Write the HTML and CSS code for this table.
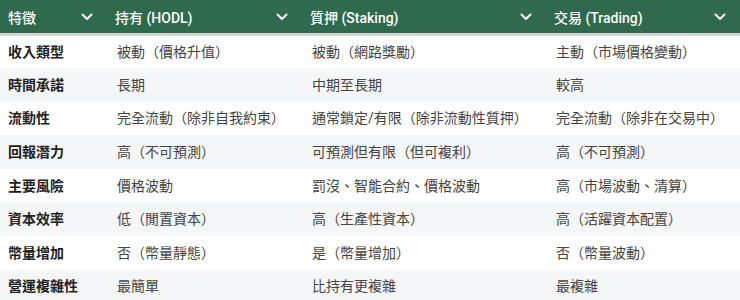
FILE: index.html
```html
<!DOCTYPE html>
<html lang="zh-Hant">
<head>
<meta charset="utf-8">
<link rel="stylesheet" href="styles.css">
</head>
<body>
<table class="cmp">
  <colgroup>
    <col class="c1"><col class="c2"><col class="c3"><col class="c4">
  </colgroup>
  <thead>
    <tr>
      <th><div class="th"><span>特徵</span><svg class="chev" viewBox="0 0 12 8"><path d="M1.5 1.5 L6 6 L10.5 1.5"/></svg></div></th>
      <th><div class="th"><span>持有 (HODL)</span><svg class="chev" viewBox="0 0 12 8"><path d="M1.5 1.5 L6 6 L10.5 1.5"/></svg></div></th>
      <th><div class="th"><span>質押 (Staking)</span><svg class="chev" viewBox="0 0 12 8"><path d="M1.5 1.5 L6 6 L10.5 1.5"/></svg></div></th>
      <th><div class="th"><span>交易 (Trading)</span><svg class="chev" viewBox="0 0 12 8"><path d="M1.5 1.5 L6 6 L10.5 1.5"/></svg></div></th>
    </tr>
  </thead>
  <tbody>
    <tr><td>收入類型</td><td>被動（價格升值）</td><td>被動（網路獎勵）</td><td>主動（市場價格變動）</td></tr>
    <tr><td>時間承諾</td><td>長期</td><td>中期至長期</td><td>較高</td></tr>
    <tr><td>流動性</td><td>完全流動（除非自我約束）</td><td>通常鎖定/有限（除非流動性質押）</td><td>完全流動（除非在交易中）</td></tr>
    <tr><td>回報潛力</td><td>高（不可預測）</td><td>可預測但有限（但可複利）</td><td>高（不可預測）</td></tr>
    <tr><td>主要風險</td><td>價格波動</td><td>罰沒、智能合約、價格波動</td><td>高（市場波動、清算）</td></tr>
    <tr><td>資本效率</td><td>低（閒置資本）</td><td>高（生產性資本）</td><td>高（活躍資本配置）</td></tr>
    <tr><td>幣量增加</td><td>否（幣量靜態）</td><td>是（幣量增加）</td><td>否（幣量波動）</td></tr>
    <tr><td>營運複雜性</td><td>最簡單</td><td>比持有更複雜</td><td>最複雜</td></tr>
  </tbody>
</table>
</body>
</html>
```

FILE: styles.css
```css
html, body {
  margin: 0;
  padding: 0;
  background: #ffffff;
}
body {
  font-family: Roboto, "Noto Sans CJK TC", "Noto Sans", sans-serif;
  font-size: 14px;
  color: #444444;
}
.cmp {
  width: 740px;
  border-collapse: collapse;
  table-layout: fixed;
}
.c1 { width: 107px; }
.c2 { width: 195px; }
.c3 { width: 244px; }
.c4 { width: 194px; }
thead th {
  background: #2f6a4e;
  color: #ffffff;
  font-weight: 500;
  text-align: left;
  padding: 0;
  height: 33px;
  border-bottom: 1px solid #24553e;
}
thead tr {
  border-bottom: 3px solid #d3d3d3;
}
.th {
  display: flex;
  align-items: center;
  justify-content: space-between;
  padding: 0 14px 0 8px;
  height: 33px;
}
.chev {
  width: 12px;
  height: 8px;
  fill: none;
  stroke: #ffffff;
  stroke-width: 2;
  stroke-linecap: round;
  stroke-linejoin: round;
}
tbody td {
  height: 33.6px;
  padding: 0 10px;
  line-height: 20px;
  white-space: nowrap;
  box-sizing: border-box;
}
tbody td:first-child {
  padding-left: 8px;
  font-weight: 700;
  color: #222222;
}
tbody tr:nth-child(even) td {
  background: #f5f6f7;
}
```
